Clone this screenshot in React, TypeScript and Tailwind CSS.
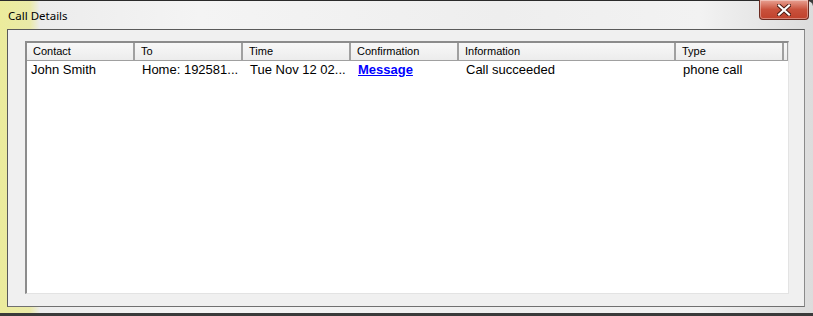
import React from 'react';

interface Column {
  label: string;
  width: number;
}

const columns: Column[] = [
  { label: 'Contact', width: 108 },
  { label: 'To', width: 108 },
  { label: 'Time', width: 108 },
  { label: 'Confirmation', width: 108 },
  { label: 'Information', width: 217 },
  { label: 'Type', width: 108 },
];

const row = ['John Smith', 'Home: 192581...', 'Tue Nov 12 02...', 'Message', 'Call succeeded', 'phone call'];

const CloseButton: React.FC = () => (
  <div className="absolute left-[759px] top-0 h-[20px] w-[50px] rounded-b-[4px] border border-t-0 border-[#6b2a20] bg-gradient-to-b from-[#e8a193] via-[#c9513c] to-[#c0412c] shadow-[inset_0_0_0_1px_rgba(255,255,255,0.35)] flex items-center justify-center">
    <svg width="14" height="12" viewBox="0 0 14 12">
      <path d="M2 1.5 L12 10.5 M12 1.5 L2 10.5" stroke="#4a1a12" strokeWidth="4" strokeLinecap="square" />
      <path d="M2 1.5 L12 10.5 M12 1.5 L2 10.5" stroke="#ffffff" strokeWidth="2.2" strokeLinecap="square" />
    </svg>
  </div>
);

const App: React.FC = () => {
  return (
    <div className="relative w-[813px] h-[316px] overflow-hidden bg-[#3a3a3a]">
      {/* aero frame */}
      <div className="absolute inset-0 bottom-[3px] rounded-tr-[6px] border-t border-[#2a2a2a] bg-[linear-gradient(90deg,#ecec9c_0px,#eaeaa8_30px,#ececec_40px,#f4f4f4_200px,#eeeeee_500px,#f2f2f2_700px,#dcdcdc_813px)] flex flex-col">
        <div className="h-[28px] shrink-0 pl-[8px] pt-[6px] text-[11.5px] text-black" style={{ fontFamily: '"Noto Sans", "Open Sans", sans-serif' }}>
          Call Details
        </div>
        <div className="ml-[7px] mr-[8px] mb-[6px] flex-1 min-w-0 flex bg-[#f0f0f0] border-t border-l border-[#5a5a5a] border-r border-b border-r-[#8a8a8a] border-b-[#707070] pl-[17px] pr-[15px] pt-[11px] pb-[12px]">
          <div className="flex-1 min-w-0 flex flex-col bg-white border-t-2 border-l-2 border-t-[#8c8c8c] border-l-[#8c8c8c] border-r border-b border-r-[#e3e3e3] border-b-[#e3e3e3]">
            <div className="h-[18px] flex bg-gradient-to-b from-[#f8f8f8] to-[#ececec] border-b border-[#a0a0a0]" style={{ fontFamily: '"Liberation Sans", Arial, sans-serif' }}>
              {columns.map((c) => (
                <div
                  key={c.label}
                  className="h-full shrink-0 border-r-2 border-r-[#a0a0a0] pl-[6px] text-[11px] leading-[17px] text-black"
                  style={{ width: c.width }}
                >
                  {c.label}
                </div>
              ))}
              <div className="flex-1 border-r border-[#a0a0a0]" />
            </div>
            <div className="flex h-[17px] items-center" style={{ fontFamily: '"Liberation Sans", Arial, sans-serif' }}>
              {row.map((cell, i) => (
                <div
                  key={i}
                  className={
                    'shrink-0 text-[13px] leading-[17px] whitespace-nowrap ' +
                    (i === 0 ? 'pl-[4px] ' : 'pl-[7px] ') +
                    (i === 3 ? 'font-bold underline text-[#0000ff]' : 'text-black')
                  }
                  style={{ width: columns[i].width }}
                >
                  {cell}
                </div>
              ))}
            </div>
          </div>
        </div>
      </div>
      <CloseButton />
    </div>
  );
};

export default App;
